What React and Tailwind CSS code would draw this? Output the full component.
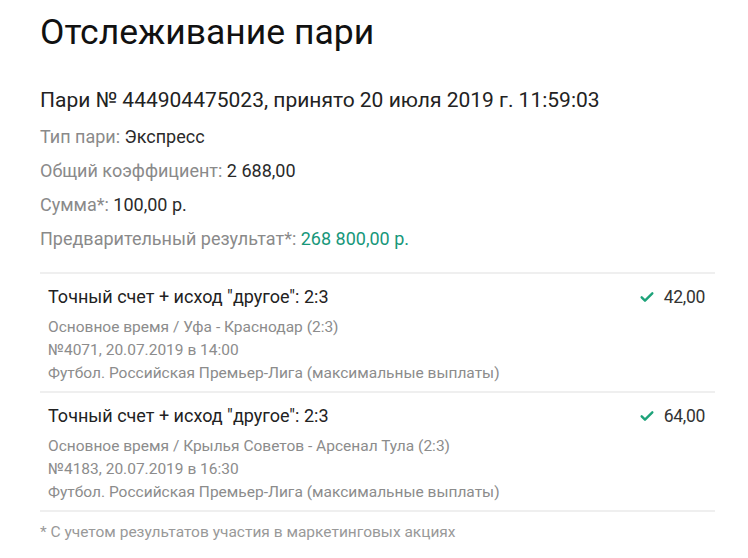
import React from "react";

const info = [
  { label: "Тип пари:", value: "Экспресс" },
  { label: "Общий коэффициент:", value: "2 688,00" },
  { label: "Сумма*:", value: "100,00 р." },
  { label: "Предварительный результат*:", value: "268 800,00 р.", accent: true },
];

const bets = [
  {
    title: 'Точный счет + исход "другое": 2:3',
    coef: "42,00",
    lines: [
      "Основное время / Уфа - Краснодар (2:3)",
      "№4071, 20.07.2019 в 14:00",
      "Футбол. Российская Премьер-Лига (максимальные выплаты)",
    ],
  },
  {
    title: 'Точный счет + исход "другое": 2:3',
    coef: "64,00",
    lines: [
      "Основное время / Крылья Советов - Арсенал Тула (2:3)",
      "№4183, 20.07.2019 в 16:30",
      "Футбол. Российская Премьер-Лига (максимальные выплаты)",
    ],
  },
];

const Check = () => (
  <svg className="w-[16px] h-[16px] text-[#1ea37a]" viewBox="0 0 24 24" fill="none" stroke="currentColor" strokeWidth={3.6} strokeLinecap="round" strokeLinejoin="round">
    <path d="M4 12.5l5 5L20 6.5" />
  </svg>
);

const App = () => {
  return (
    <div className="min-h-screen bg-white px-10 pt-[10px] font-['Roboto',sans-serif]">
      <div className="w-[675px]">
        <h1 className="text-[35.5px] leading-[44px] text-[#111]">Отслеживание пари</h1>

        <p className="mt-[32px] text-[21px] leading-[28px] text-[#222]">
          Пари № 444904475023, принято 20 июля 2019 г. 11:59:03
        </p>

        <div className="mt-[6px]">
          {info.map((row) => (
            <p key={row.label} className="text-[18px] leading-[34px] text-[#8a8a8a]">
              {row.label}{" "}
              <span className={row.accent ? "text-[#17977a]" : "text-[#2a2a2a]"}>{row.value}</span>
            </p>
          ))}
        </div>

        <div className="mt-[16px]">
          {bets.map((bet, i) => (
            <div key={i} className="border-t-2 border-[#efefef] pl-2 pr-[10px] pt-[10px] pb-[6px]">
              <div className="flex items-center justify-between">
                <span className="text-[18px] leading-[26px] text-[#222]">{bet.title}</span>
                <span className="flex items-center gap-[9px] text-[17.5px] leading-[26px] tracking-[-0.3px] text-[#333]">
                  <Check />
                  {bet.coef}
                </span>
              </div>
              <div className="mt-[6px] text-[15.5px] leading-[23px] text-[#8c8c8c]">
                {bet.lines.map((l) => (
                  <p key={l}>{l}</p>
                ))}
              </div>
            </div>
          ))}
          <div className="border-t-2 border-[#efefef] pt-[9px]">
            <p className="text-[15.5px] leading-[22px] text-[#999]">
              * С учетом результатов участия в маркетинговых акциях
            </p>
          </div>
        </div>
      </div>
    </div>
  );
};

export default App;
